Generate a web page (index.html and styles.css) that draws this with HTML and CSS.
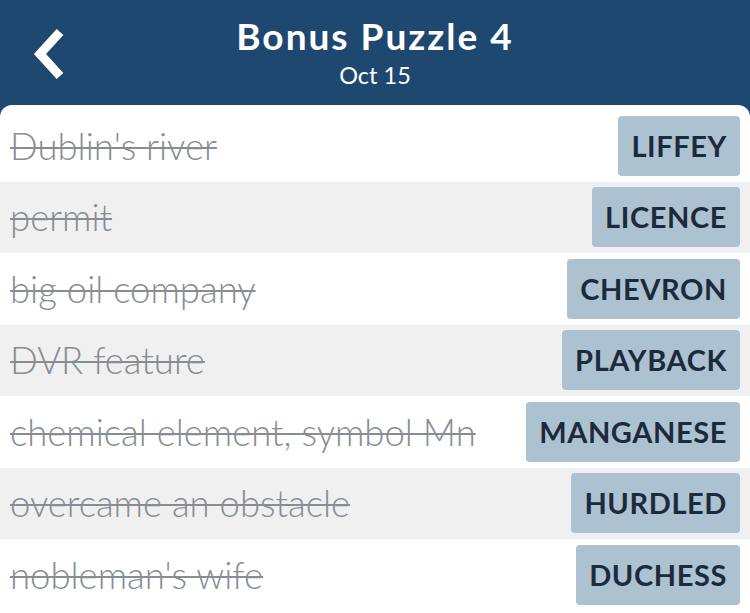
FILE: index.html
```html
<!DOCTYPE html>
<html lang="en">
<head>
    <meta charset="UTF-8">
    <meta name="viewport" content="width=device-width, initial-scale=1.0">
    <title>Bonus Puzzle 4</title>
    <link rel="stylesheet" href="styles.css">
</head>
<body>

    <header class="topbar">
        <button class="back-btn" aria-label="Back">
            <svg width="40" height="62" viewBox="0 0 40 62">
                <path d="M30 9 L10 31 L30 53" fill="none" stroke="#fff" stroke-width="9" stroke-linejoin="miter"/>
            </svg>
        </button>
        <div class="titles">
            <h1>Bonus Puzzle 4</h1>
            <p class="date">Oct 15</p>
        </div>
    </header>

    <div class="card">
        <div class="row">
            <span class="clue">Dublin's river</span>
            <span class="answer">LIFFEY</span>
        </div>
        <div class="row alt">
            <span class="clue">permit</span>
            <span class="answer">LICENCE</span>
        </div>
        <div class="row">
            <span class="clue">big oil company</span>
            <span class="answer">CHEVRON</span>
        </div>
        <div class="row alt">
            <span class="clue">DVR feature</span>
            <span class="answer">PLAYBACK</span>
        </div>
        <div class="row">
            <span class="clue">chemical element, symbol Mn</span>
            <span class="answer">MANGANESE</span>
        </div>
        <div class="row alt">
            <span class="clue">overcame an obstacle</span>
            <span class="answer">HURDLED</span>
        </div>
        <div class="row">
            <span class="clue">nobleman's wife</span>
            <span class="answer">DUCHESS</span>
        </div>
    </div>

</body>
</html>
```

FILE: styles.css
```css
body {
    margin: 0;
    background: #1f4870;
    font-family: 'Lato', 'Open Sans', sans-serif;
    overflow: hidden;
}
.topbar {
    height: 105px;
    background: #1f4870;
    color: #fff;
    position: relative;
    display: flex;
    justify-content: center;
}
.back-btn {
    position: absolute;
    left: 30px;
    top: 23px;
    background: none;
    border: none;
    padding: 0;
    cursor: pointer;
}
.titles {
    text-align: center;
}
h1 {
    margin: 13px 0 0;
    font-size: 37px;
    font-weight: 700;
    letter-spacing: 2px;
    line-height: 46px;
}
.date {
    margin: 2px 0 0;
    font-size: 23.5px;
    line-height: 28px;
}
.card {
    background: #fff;
    border-radius: 12px 12px 0 0;
    padding-top: 5px;
    height: 506px;
    border-bottom: 3px solid #eeeeee;
}
.row {
    height: 71.5px;
    display: flex;
    align-items: center;
    justify-content: space-between;
    padding: 0 10px;
}
.row.alt {
    background: #f0f0f0;
}
.clue {
    font-size: 36.5px;
    font-weight: 300;
    color: #878d93;
    text-decoration: line-through;
    text-decoration-thickness: 2px;
}
.answer {
    background: #adc2d0;
    color: #1c2b3b;
    font-weight: 700;
    font-size: 29px;
    letter-spacing: 0.6px;
    height: 60px;
    line-height: 60px;
    padding: 0 13px;
    border-radius: 4px;
}
```
